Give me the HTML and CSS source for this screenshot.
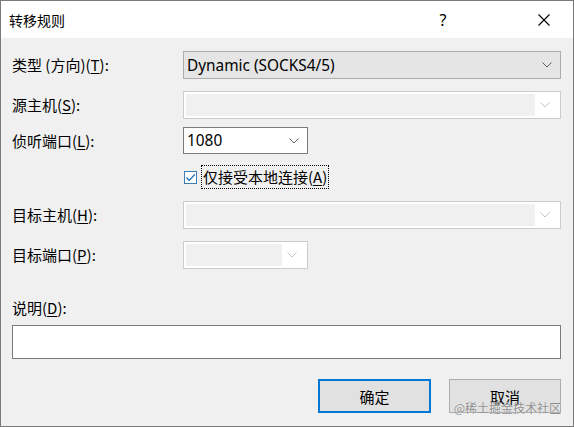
FILE: index.html
```html
<!DOCTYPE html>
<html>
<head>
<meta charset="utf-8">
<link rel="stylesheet" href="styles.css">
</head>
<body>
<div class="window">
  <div class="titlebar">
    <span class="title">转移规则</span>
    <span class="tb-help">?</span>
    <span class="tb-close">
      <svg width="12" height="12" viewBox="0 0 12 12"><path d="M0.5 0.5 L11.5 11.5 M11.5 0.5 L0.5 11.5" stroke="#000" stroke-width="1.1" fill="none"/></svg>
    </span>
  </div>
  <div class="content">
    <div class="row r1">
      <label class="lbl">类型 (方向)(<u>T</u>):</label>
      <div class="combo combo-btn wide">
        <span class="val">Dynamic (SOCKS4/5)</span>
        <svg class="chev" width="10" height="6" viewBox="0 0 10 6"><path d="M0.5 0.5 L5 5 L9.5 0.5" stroke="#606060" fill="none"/></svg>
      </div>
    </div>
    <div class="row r2">
      <label class="lbl">源主机(<u>S</u>):</label>
      <div class="combo disabled wide">
        <span class="inner"></span>
        <svg class="chev" width="10" height="6" viewBox="0 0 10 6"><path d="M0.5 0.5 L5 5 L9.5 0.5" stroke="#c4c4c4" fill="none"/></svg>
      </div>
    </div>
    <div class="row r3">
      <label class="lbl">侦听端口(<u>L</u>):</label>
      <div class="combo edit narrow">
        <span class="val">1080</span>
        <svg class="chev" width="10" height="6" viewBox="0 0 10 6"><path d="M0.5 0.5 L5 5 L9.5 0.5" stroke="#606060" fill="none"/></svg>
      </div>
    </div>
    <div class="row r4">
      <span class="lbl"></span>
      <div class="check">
        <span class="box"><svg width="11" height="11" viewBox="0 0 11 11"><path d="M1.5 5.5 L4.3 8.3 L9.8 2.3" stroke="#0a64b4" stroke-width="1.2" fill="none"/></svg></span>
        <span class="check-lbl">仅接受本地连接(<u>A</u>)</span>
      </div>
    </div>
    <div class="row r5">
      <label class="lbl">目标主机(<u>H</u>):</label>
      <div class="combo disabled wide">
        <span class="inner"></span>
        <svg class="chev" width="10" height="6" viewBox="0 0 10 6"><path d="M0.5 0.5 L5 5 L9.5 0.5" stroke="#c4c4c4" fill="none"/></svg>
      </div>
    </div>
    <div class="row r6">
      <label class="lbl">目标端口(<u>P</u>):</label>
      <div class="combo disabled narrow">
        <span class="inner"></span>
        <svg class="chev" width="10" height="6" viewBox="0 0 10 6"><path d="M0.5 0.5 L5 5 L9.5 0.5" stroke="#c4c4c4" fill="none"/></svg>
      </div>
    </div>
    <div class="desc-lbl">说明(<u>D</u>):</div>
    <div class="textbox"></div>
    <div class="buttons">
      <div class="btn default">确定</div>
      <div class="btn">取消</div>
    </div>
  </div>
  <div class="watermark">@稀土掘金技术社区</div>
</div>
</body>
</html>
```
FILE: styles.css
```css
* { box-sizing: border-box; }
html, body { margin: 0; padding: 0; }
body {
  width: 574px;
  height: 427px;
  font-family: "Noto Sans", "Noto Sans CJK SC", sans-serif;
  font-size: 15px;
  color: #000;
  overflow: hidden;
}
.window {
  position: relative;
  width: 574px;
  height: 427px;
  border: 1px solid #7a7a7a;
  background: #f0f0f0;
}
.titlebar {
  height: 37px;
  background: #fff;
  display: flex;
  align-items: center;
  padding-left: 8px;
}
.title {
  font-family: "Noto Sans CJK SC", sans-serif;
  font-size: 14px;
  flex: 1;
}
.tb-help {
  font-family: "Noto Sans", sans-serif;
  font-size: 16px;
  width: 20px;
  text-align: center;
  margin-right: 85px;
}
.tb-close {
  width: 12px;
  height: 12px;
  display: flex;
  margin-right: 23px;
}
.content {
  padding: 0 12px 0 11px;
}
.row {
  display: flex;
  align-items: center;
}
.lbl {
  width: 171px;
  flex: none;
  font-family: "Noto Sans CJK SC", sans-serif;
  font-size: 15px;
  line-height: 20px;
}
u { text-decoration-thickness: 1px; text-underline-offset: 2px; }
.r1 { margin-top: 13px; height: 28px; }
.r2 { margin-top: 12px; height: 28px; }
.r3 { margin-top: 8px; height: 27px; }
.r4 { margin-top: 11px; height: 24px; }
.r5 { margin-top: 12px; height: 28px; }
.r6 { margin-top: 12px; height: 28px; }
.combo {
  height: 100%;
  display: flex;
  align-items: center;
  position: relative;
}
.wide { width: 378px; }
.narrow { width: 125px; }
.combo .val {
  flex: 1;
  padding-left: 3px;
  font-size: 15.4px;
}
.combo .chev { margin-right: 8px; }
.combo-btn {
  background: #e5e5e5;
  border: 1px solid #adadad;
}
.edit {
  background: #fff;
  border: 1px solid #7a7a7a;
}
.disabled {
  background: #fff;
  border: 1px solid #cccccc;
  padding: 2px;
}
.disabled .inner {
  flex: 1;
  align-self: stretch;
  background: #f0f0f0;
  margin-right: 5px;
}
.check {
  display: flex;
  align-items: center;
  height: 100%;
}
.box {
  width: 13px;
  height: 13px;
  border: 1px solid #3d7cb4;
  background: #fff;
  display: flex;
  align-items: center;
  justify-content: center;
  margin-left: 1px;
  margin-right: 4px;
}
.check-lbl {
  font-family: "Noto Sans CJK SC", sans-serif;
  font-size: 15px;
  line-height: 20px;
  border: 1px dotted #000;
  padding: 0 1px;
  height: 24px;
  display: flex;
  align-items: center;
}
.desc-lbl {
  margin-top: 29px;
  font-family: "Noto Sans CJK SC", sans-serif;
  font-size: 15px;
  line-height: 20px;
  height: 20px;
}
.textbox {
  margin-top: 7px;
  height: 34px;
  background: #fff;
  border: 1px solid #7a7a7a;
}
.buttons {
  display: flex;
  justify-content: flex-end;
  gap: 18px;
  margin-top: 20px;
}
.btn {
  height: 34px;
  width: 112px;
  background: #e1e1e1;
  border: 1px solid #adadad;
  display: flex;
  align-items: center;
  justify-content: center;
  font-family: "Noto Sans CJK SC", sans-serif;
  font-size: 15px;
}
.btn.default {
  width: 113px;
  border: 2px solid #0078d7;
}
.watermark {
  position: absolute;
  right: 12px;
  bottom: 10px;
  font-family: "Noto Sans CJK SC", sans-serif;
  font-size: 12px;
  color: rgba(120, 120, 120, 0.85);
  text-shadow: 0 0 1px #fff;
  letter-spacing: 0;
}
```
